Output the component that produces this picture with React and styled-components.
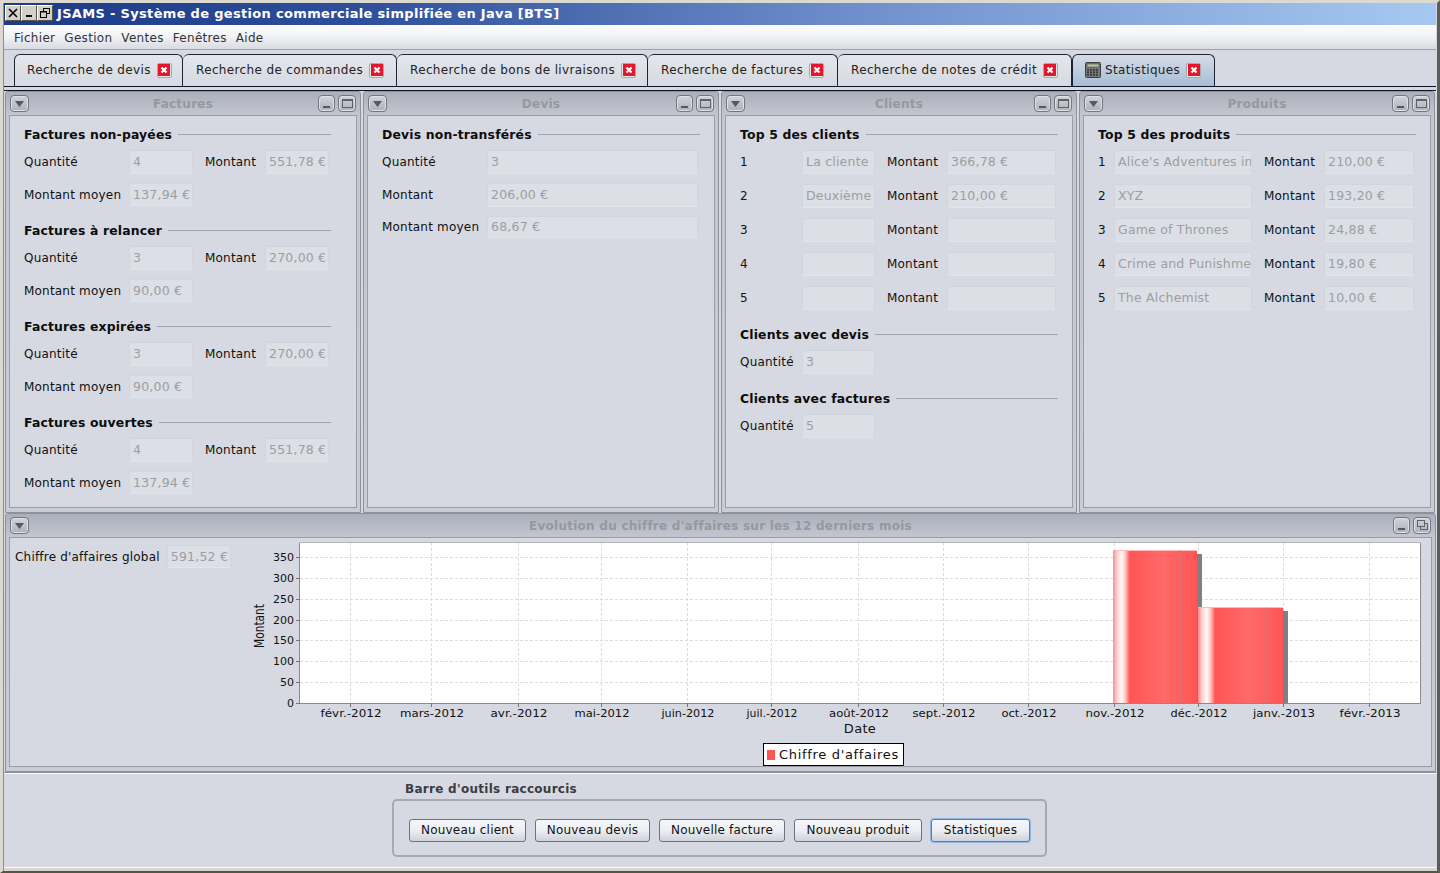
import React from 'react'
import styled, { createGlobalStyle } from 'styled-components'

const GlobalStyle = createGlobalStyle`
  html, body { margin: 0; padding: 0; background: #d4d0c8; }
  body { font-family: "DejaVu Sans", sans-serif; font-size: 12px; letter-spacing: 0.2px; color: #111; }
  * { box-sizing: border-box; }
`

const Frame = styled.div`
  width: 1440px;
  height: 873px;
  overflow: hidden;
  display: flex;
  flex-direction: column;
  background: #d6d9e1;
  border-style: solid;
  border-width: 3px 3px 2px 3px;
  border-color: #dcd9d0 #5c5c5a #55534e #dcd9d0;
  box-shadow: inset 1px 0 0 #8a8c92;
  padding: 0 1px 0 1px;
`

const TitleBar = styled.div`
  height: 22px;
  flex: none;
  display: flex;
  align-items: center;
  gap: 4px;
  padding: 0 0 2px 1px;
  background: linear-gradient(90deg, #1c3a85 0%, #2f4f9a 25%, #6f90cc 60%, #a6c8f0 100%);
  color: #fff;
  font-weight: bold;
  font-size: 13px;
  letter-spacing: 0.32px;
`

const WinButtons = styled.div`
  display: flex;
  flex: none;
`

const WinButton = styled.div`
  width: 16px;
  height: 16px;
  background: #d4d0c8;
  border: 1px solid;
  border-color: #fff #55534e #55534e #fff;
  display: flex;
  align-items: center;
  justify-content: center;
`

const MenuBar = styled.div`
  height: 25px;
  flex: none;
  display: flex;
  align-items: center;
  gap: 9px;
  padding: 1px 0 0 10px;
  background: linear-gradient(180deg, #fdfdfe 0%, #f2f3f6 45%, #d9dbe1 100%);
  border-bottom: 1px solid #a0a3ab;
  color: #333;
  font-size: 12px;
  letter-spacing: 0.3px;
`

const TabStrip = styled.div`
  height: 41px;
  flex: none;
  padding: 4px 0 3px;
  background: #d6d9e1;
  border-bottom: 1px solid #0c1526;
`

const TabRow = styled.div`
  height: 33px;
  display: flex;
  padding-left: 10px;
  border-bottom: 1px solid #0c1526;
`

const Tab = styled.div`
  width: ${p => p.$width}px;
  height: 32px;
  flex: none;
  display: flex;
  align-items: center;
  gap: 6px;
  padding: 0 0 1px ${p => (p.$first || p.$active ? 12 : 13)}px;
  border: 1px solid #1c2433;
  border-bottom: none;
  border-left-width: ${p => (p.$first || p.$active ? 1 : 0)}px;
  border-radius: 6px 6px 0 0;
  background: ${p =>
    p.$active
      ? 'linear-gradient(180deg, #d6dbe4 0%, #c3d0df 40%, #a5bdd5 100%)'
      : 'linear-gradient(180deg, #e4e6eb 0%, #d6d9e1 100%)'};
  color: #222;
  letter-spacing: 0.36px;
`

const CloseBox = styled.span`
  width: 15px;
  height: 15px;
  flex: none;
  border: 1px solid #a8a9ae;
  border-radius: 2px;
  padding: 0.5px;
  background: #e6e7ea;
  display: flex;
`

const PanelRow = styled.div`
  height: 422px;
  flex: none;
  display: grid;
  grid-template-columns: repeat(4, 356px);
  column-gap: 2px;
  padding-left: 1px;
`

const Panel = styled.section`
  display: flex;
  flex-direction: column;
  padding: 0 3px 4px 3px;
  border: 1px solid #8f929b;
  border-radius: 3px 3px 0 0;
  background: linear-gradient(180deg, #abafb9 0, #c4c7d0 24px, #c9ccd4 100%);
  min-height: 0;
`

const PanelHead = styled.header`
  height: 23px;
  flex: none;
  display: flex;
  align-items: center;
  justify-content: space-between;
  position: relative;
  padding-left: 1px;
`

const PanelTitle = styled.span`
  position: absolute;
  left: 0;
  right: 0;
  text-align: center;
  font-weight: bold;
  font-size: 12px;
  color: #96989f;
  letter-spacing: 0.25px;
`

const HeadButton = styled.span`
  width: ${p => p.$w || 17}px;
  height: 17px;
  border: 1px solid #72757d;
  border-radius: 4px;
  background: linear-gradient(180deg, #d0d3da, #aeb1b9);
  box-shadow: inset 0 0 0 1px #dfe1e6;
  display: flex;
  align-items: center;
  justify-content: center;
`

const HeadButtons = styled.span`
  display: flex;
  gap: 3px;
  margin-right: 1px;
`

const PanelBody = styled.div`
  flex: 1;
  background: #d6d9e1;
  border: 1px solid #9a9da6;
  padding: 8px ${p => p.$right || 25}px 0 14px;
  min-height: 0;
`

const Section = styled.div`
  display: flex;
  flex-direction: column;
  margin-bottom: 14px;
`

const SectionTitle = styled.div`
  height: 20px;
  margin-bottom: 6px;
  display: flex;
  align-items: center;
  gap: 6px;
  font-weight: bold;
  font-size: 12.4px;
  letter-spacing: 0.17px;
  color: #0c0c0c;
  &::after {
    content: '';
    flex: 1;
    height: 1px;
    background: #9fa2aa;
  }
`

const Rows = styled.div`
  display: flex;
  flex-direction: column;
  gap: ${p => p.$gap}px;
  padding-right: 2px;
`

const Row = styled.div`
  display: grid;
  grid-template-columns: ${p => p.$cols};
  align-items: center;
  height: ${p => p.$h || 24}px;
`

const Field = styled.div`
  height: 100%;
  display: flex;
  align-items: center;
  padding: 0 0 1px 3px;
  background: #dcdfe5;
  border: 1px solid #d2d5dc;
  border-bottom-color: #e3e5ea;
  color: #9c9ea4;
  white-space: nowrap;
  overflow: hidden;
  font-size: 12.5px;
`

const Label = styled.span`
  white-space: nowrap;
`

const ChartPanel = styled(Panel)`
  height: 259px;
  flex: none;
  margin-left: 1px;
  width: 1431px;
`

const ChartBody = styled(PanelBody)`
  display: flex;
  padding: 0;
`

const Summary = styled.div`
  width: 235px;
  flex: none;
  height: 23px;
  margin-top: 7px;
  padding-left: 5px;
  display: flex;
  align-items: center;
  gap: 7px;
`

const SummaryField = styled(Field)`
  width: 64px;
  height: 23px;
  flex: none;
`

const ChartColumn = styled.div`
  flex: 1;
  padding-top: 3px;
  display: flex;
  flex-direction: column;
  align-items: flex-start;
`

const Legend = styled.div`
  height: 23px;
  display: flex;
  align-items: center;
  gap: 4px;
  padding: 0 4px 0 3px;
  margin: 3px 0 0 518px;
  background: #fff;
  border: 1px solid #000;
  font-size: 13px;
  letter-spacing: 0.68px;
  &::before {
    content: '';
    width: 8px;
    height: 10px;
    background: #ff5555;
  }
`

const Toolbar = styled.div`
  flex: 1;
  border-top: 1px solid #8a8d96;
  border-bottom: 3px solid #d8d5cc;
  box-shadow: inset 0 1px 0 #fff, inset 0 -1px 0 #fff;
  display: flex;
  flex-direction: column;
  align-items: flex-start;
  padding: 9px 0 0 388px;
`

const ToolbarTitle = styled.div`
  height: 16px;
  padding-left: 13px;
  font-weight: bold;
  font-size: 12px;
  letter-spacing: 0.28px;
  color: #3a3c42;
  margin-bottom: 1px;
`

const ToolbarBox = styled.div`
  width: 655px;
  height: 58px;
  border: 2px solid #a7aab2;
  border-radius: 5px;
  display: flex;
  align-items: center;
  gap: 9px;
  padding: 4px 0 0 15px;
`

const ToolButton = styled.button`
  height: 23px;
  width: ${p => p.$w}px;
  padding: 0;
  font: inherit;
  letter-spacing: 0.2px;
  color: #111;
  border: 1px solid ${p => (p.$focus ? '#5f7ea6' : '#6f7279')};
  border-radius: 3px;
  background: linear-gradient(180deg, #f6f7f9 0%, #eceef2 50%, #cfd2d9 100%);
  box-shadow: ${p => (p.$focus ? '0 0 0 1px #8fb6e2' : 'none')};
`

const CloseIcon = () => (
  <CloseBox>
    <svg width="12" height="12" viewBox="0 0 12 12">
      <rect width="12" height="12" fill="#e3162b" />
      <path d="M3.5 3.5 L8.5 8.5 M8.5 3.5 L3.5 8.5" stroke="#fff" strokeWidth="2.2" />
    </svg>
  </CloseBox>
)

const CalcIcon = () => (
  <svg width="16" height="16" viewBox="0 0 16 16" style={{ flex: 'none', marginRight: -2 }}>
    <rect x="0.5" y="0.5" width="15" height="15" rx="1" fill="#77797a" stroke="#3e3f40" />
    <rect x="2" y="2" width="12" height="3" fill="#b8c2a0" stroke="#3e3f40" strokeWidth="0.5" />
    {[7, 9.5, 12].map(y =>
      [2, 5, 8, 11].map(x => <rect key={`${x}-${y}`} x={x} y={y} width="2" height="1.6" fill="#35363a" />)
    )}
  </svg>
)

const DownArrow = () => (
  <svg width="9" height="6" viewBox="0 0 9 6"><path d="M0 0 H9 L4.5 6 Z" fill="#55585f" /></svg>
)

const MinIcon = () => (
  <svg width="11" height="11" viewBox="0 0 11 11"><rect x="2" y="8" width="7" height="2" fill="#55585f" /></svg>
)

const MaxIcon = () => (
  <svg width="11" height="11" viewBox="0 0 11 11"><rect x="0.5" y="1.5" width="10" height="8" fill="none" stroke="#5f6269" /><path d="M0 2 H11" stroke="#5f6269" strokeWidth="2" /></svg>
)

const RestoreIcon = () => (
  <svg width="11" height="11" viewBox="0 0 11 11" fill="none" stroke="#5f6269">
    <rect x="0.5" y="0.5" width="7" height="6" />
    <path d="M3.5 7 V9.5 H10.5 V3.5 H8" />
  </svg>
)

const Head = ({ title, restore }) => (
  <PanelHead>
    <PanelTitle>{title}</PanelTitle>
    <HeadButton $w={19}><DownArrow /></HeadButton>
    <HeadButtons>
      <HeadButton><MinIcon /></HeadButton>
      <HeadButton $w={18}>{restore ? <RestoreIcon /> : <MaxIcon />}</HeadButton>
    </HeadButtons>
  </PanelHead>
)

const InvoiceGroup = ({ title, qty, total, mean }) => (
  <Section>
    <SectionTitle>{title}</SectionTitle>
    <Rows $gap={9}>
      <Row $cols="105px 64px 12px 60px 64px">
        <Label>Quantité</Label>
        <Field>{qty}</Field>
        <span />
        <Label>Montant</Label>
        <Field>{total}</Field>
      </Row>
      <Row $cols="105px 64px" $h={23}>
        <Label>Montant moyen</Label>
        <Field>{mean}</Field>
      </Row>
    </Rows>
  </Section>
)

const RankRows = ({ rows, cols }) => (
  <Section>
    <SectionTitle>{rows.title}</SectionTitle>
    <Rows $gap={10}>
      {rows.items.map(([name, amount], i) => (
        <Row key={i} $cols={cols}>
          <Label>{i + 1}</Label>
          <Field>{name}</Field>
          <span />
          <Label>Montant</Label>
          <Field>{amount}</Field>
        </Row>
      ))}
    </Rows>
  </Section>
)

const CountGroup = ({ title, value }) => (
  <Section>
    <SectionTitle>{title}</SectionTitle>
    <Row $cols="62px 73px">
      <Label>Quantité</Label>
      <Field>{value}</Field>
    </Row>
  </Section>
)

const tabs = [
  ['Recherche de devis', 169],
  ['Recherche de commandes', 214],
  ['Recherche de bons de livraisons', 251],
  ['Recherche de factures', 190],
  ['Recherche de notes de crédit', 234],
]

const gridX = [350, 431, 518, 601, 687, 771, 858, 943, 1028, 1114, 1198, 1283, 1369]
const months = ['févr.-2012', 'mars-2012', 'avr.-2012', 'mai-2012', 'juin-2012', 'juil.-2012', 'août-2012', 'sept.-2012', 'oct.-2012', 'nov.-2012', 'déc.-2012', 'janv.-2013', 'févr.-2013']
const labelW = [61, 64, 57, 55, 53, 51, 60, 63, 55, 59, 57, 62, 61]
const gridY = [[350, 557], [300, 578], [250, 599], [200, 620], [150, 640], [100, 661], [50, 682], [0, 703]]

// svg starts at x=245, y=541 on the page
const OX = 245
const OY = 541

const Bar = ({ x, w, y }) => (
  <g>
    <rect x={x + w} y={y + 4} width="5" height={703 - OY - y - 4} fill="#808080" />
    <rect x={x} y={y} width={w} height={703 - OY - y} fill="url(#barFill)" />
    <rect x={x} y={y} width={w} height="1" fill="#ffb9b9" />
    <rect x={x + w * 0.8} y={y} width="0.8" height={703 - OY - y} fill="#c08080" opacity="0.7" />
  </g>
)

const Chart = () => (
  <svg width="1177" height="199" viewBox="0 0 1177 199" style={{ display: 'block', flex: 'none' }}>
    <defs>
      <linearGradient id="barFill" x1="0" x2="1" y1="0" y2="0">
        <stop offset="0" stopColor="#ff8a8a" />
        <stop offset="0.05" stopColor="#ffd4d4" />
        <stop offset="0.105" stopColor="#fff8f8" />
        <stop offset="0.15" stopColor="#ffc0c0" />
        <stop offset="0.2" stopColor="#ff5555" />
        <stop offset="0.6" stopColor="#ff6a6a" />
        <stop offset="1" stopColor="#ff5555" />
      </linearGradient>
    </defs>
    <rect x={300 - OX} y={543 - OY} width="1120" height="160" fill="#fff" />
    <g stroke="#dcdcdc" strokeDasharray="3 2">
      {gridX.map(x => <line key={x} x1={x - OX + 0.5} x2={x - OX + 0.5} y1={543 - OY} y2={703 - OY} />)}
      {gridY.map(([, y]) => <line key={y} x1={300 - OX} x2={1420 - OX} y1={y - OY + 0.5} y2={y - OY + 0.5} />)}
    </g>
    <Bar x={1113 - OX} w={84} y={550 - OY} />
    <Bar x={1198 - OX} w={85} y={607 - OY} />
    <path d={`M${299.5 - OX} ${543 - OY} V${703.5 - OY} H${1420.5 - OX} V${543 - OY}`} fill="none" stroke="#8a8a8a" />
    <path d={`M${299.5 - OX} ${542.5 - OY} H${1420.5 - OX}`} stroke="#b5b5b5" />
    <g stroke="#777">
      {gridY.map(([, y]) => <line key={y} x1={296 - OX} x2={300 - OX} y1={y - OY + 0.5} y2={y - OY + 0.5} />)}
      {gridX.map(x => <line key={x} x1={x - OX + 0.5} x2={x - OX + 0.5} y1={703 - OY} y2={707 - OY} />)}
    </g>
    <g fontFamily='"DejaVu Sans", sans-serif' fontSize="11" fill="#111" style={{ letterSpacing: 0 }}>
      {gridY.map(([v, y]) => <text key={v} x={294 - OX} y={y - OY + 4} textAnchor="end">{v}</text>)}
      {months.map((m, i) => (
        <text key={i} x={gridX[i] - OX + 1} y={717 - OY} textAnchor="middle" textLength={labelW[i]} lengthAdjust="spacingAndGlyphs">{m}</text>
      ))}
      <text x={860 - OX} y={733 - OY} textAnchor="middle" fontSize="13" style={{ letterSpacing: 0.3 }}>Date</text>
      <text transform={`translate(${264 - OX} ${648 - OY}) rotate(-90)`} fontSize="14" textLength="44" lengthAdjust="spacingAndGlyphs">Montant</text>
    </g>
  </svg>
)

const clients = {
  title: 'Top 5 des clients',
  items: [['La cliente', '366,78 €'], ['Deuxième', '210,00 €'], ['', ''], ['', ''], ['', '']],
}
const products = {
  title: 'Top 5 des produits',
  items: [["Alice's Adventures in Wonderland", '210,00 €'], ['XYZ', '193,20 €'], ['Game of Thrones', '24,88 €'], ['Crime and Punishment', '19,80 €'], ['The Alchemist', '10,00 €']],
}

export default function App() {
  return (
    <Frame>
      <GlobalStyle />
      <TitleBar>
        <WinButtons>
          <WinButton>
            <svg width="10" height="10" viewBox="0 0 10 10"><path d="M1 1 L9 9 M9 1 L1 9" stroke="#000" strokeWidth="1.6" /></svg>
          </WinButton>
          <WinButton>
            <svg width="10" height="10" viewBox="0 0 10 10"><rect x="2" y="7" width="6" height="2" fill="#000" /></svg>
          </WinButton>
          <WinButton>
            <svg width="12" height="12" viewBox="0 0 12 12" fill="none" stroke="#000"><rect x="4.5" y="1.5" width="6" height="5" /><rect x="1.5" y="4.5" width="6" height="6" fill="#d4d0c8" /><path d="M1 5 H8" /></svg>
          </WinButton>
        </WinButtons>
        JSAMS - Système de gestion commerciale simplifiée en Java [BTS]
      </TitleBar>
      <MenuBar>
        <span>Fichier</span><span>Gestion</span><span>Ventes</span><span>Fenêtres</span><span>Aide</span>
      </MenuBar>
      <TabStrip>
        <TabRow>
          {tabs.map(([t, w], i) => (
            <Tab key={t} $width={w} $first={i === 0}>{t}<CloseIcon /></Tab>
          ))}
          <Tab $width={143} $active><CalcIcon />Statistiques<CloseIcon /></Tab>
        </TabRow>
      </TabStrip>
      <PanelRow>
        <Panel>
          <Head title="Factures" />
          <PanelBody>
            <InvoiceGroup title="Factures non-payées" qty="4" total="551,78 €" mean="137,94 €" />
            <InvoiceGroup title="Factures à relancer" qty="3" total="270,00 €" mean="90,00 €" />
            <InvoiceGroup title="Factures expirées" qty="3" total="270,00 €" mean="90,00 €" />
            <InvoiceGroup title="Factures ouvertes" qty="4" total="551,78 €" mean="137,94 €" />
          </PanelBody>
        </Panel>
        <Panel>
          <Head title="Devis" />
          <PanelBody $right={14}>
            <SectionTitle>Devis non-transférés</SectionTitle>
            <Rows $gap={9}>
              <Row $cols="105px 1fr"><Label>Quantité</Label><Field>3</Field></Row>
              <Row $cols="105px 1fr"><Label>Montant</Label><Field>206,00 €</Field></Row>
              <Row $cols="105px 1fr" $h={22}><Label>Montant moyen</Label><Field>68,67 €</Field></Row>
            </Rows>
          </PanelBody>
        </Panel>
        <Panel>
          <Head title="Clients" />
          <PanelBody $right={14}>
            <RankRows rows={clients} cols="62px 73px 12px 60px 1fr" />
            <CountGroup title="Clients avec devis" value="3" />
            <CountGroup title="Clients avec factures" value="5" />
          </PanelBody>
        </Panel>
        <Panel>
          <Head title="Produits" />
          <PanelBody $right={14}>
            <RankRows rows={products} cols="16px 138px 12px 60px 1fr" />
          </PanelBody>
        </Panel>
      </PanelRow>
      <ChartPanel>
        <Head title="Evolution du chiffre d'affaires sur les 12 derniers mois" restore />
        <ChartBody>
          <Summary>
            <Label>Chiffre d'affaires global</Label>
            <SummaryField>591,52 €</SummaryField>
          </Summary>
          <ChartColumn>
            <Chart />
            <Legend>Chiffre d'affaires</Legend>
          </ChartColumn>
        </ChartBody>
      </ChartPanel>
      <Toolbar>
        <ToolbarTitle>Barre d'outils raccourcis</ToolbarTitle>
        <ToolbarBox>
          <ToolButton $w={117}>Nouveau client</ToolButton>
          <ToolButton $w={115}>Nouveau devis</ToolButton>
          <ToolButton $w={126}>Nouvelle facture</ToolButton>
          <ToolButton $w={128}>Nouveau produit</ToolButton>
          <ToolButton $w={99} $focus>Statistiques</ToolButton>
        </ToolbarBox>
      </Toolbar>
    </Frame>
  )
}
